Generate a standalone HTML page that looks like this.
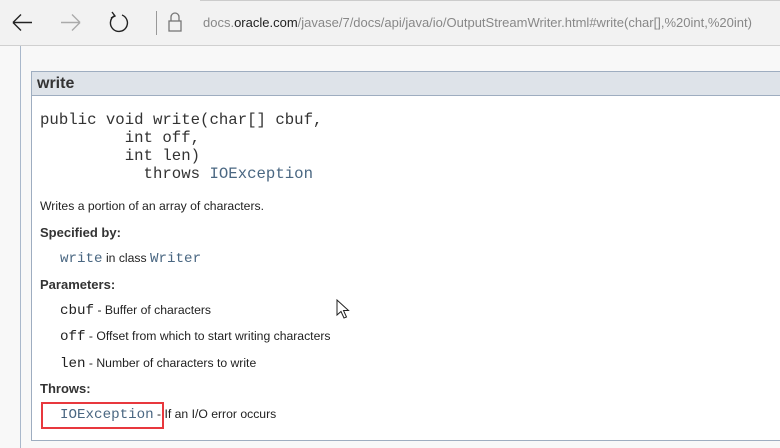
<!DOCTYPE html>
<html><head><style>
body{margin:0;width:780px;height:448px;overflow:hidden;background:#f8f8f8;font-family:"Liberation Sans",Arial,sans-serif;position:relative}
.a{position:absolute;white-space:pre}
.m{font-family:"Liberation Mono","Courier New",monospace}
.lk{color:#4a6782}
.b{font-weight:bold;font-size:13px;color:#333}
.t{font-size:12.2px;color:#222}
.s{font-size:14.2px}
</style></head><body>
<div class="a" style="left:0;top:0;width:780px;height:45px;background:#f2f2f2;border-bottom:1px solid #d0d0d0"></div>
<div class="a" style="left:200px;top:0;width:580px;height:1px;background:#ccc"></div>
<svg class="a" style="left:0;top:0" width="200" height="45">
<path d="M13 22.5H32M13 22.5L21 14.5M13 22.5L21 30.5" stroke="#222" stroke-width="1.4" fill="none"/>
<path d="M61 22.5H80M80 22.5L72 14.5M80 22.5L72 30.5" stroke="#aaa" stroke-width="1.4" fill="none"/>
<path d="M114 16A8.5 8.5 0 1 0 122 15" stroke="#222" stroke-width="1.4" fill="none"/>
<path d="M112 12L115 16L111 18" stroke="#222" stroke-width="1.4" fill="none"/>
<line x1="156.5" y1="11" x2="156.5" y2="35" stroke="#999"/>
<rect x="169" y="21" width="12" height="10" stroke="#777" stroke-width="1.3" fill="none"/>
<path d="M171 21V17A4 4 0 0 1 179 17V21" stroke="#777" stroke-width="1.3" fill="none"/>
</svg>
<div class="a" style="left:203px;top:15px;font-size:13px;color:#888;font-family:'Liberation Sans',sans-serif">docs.<span style="color:#222">oracle.com</span>/javase/7/docs/api/java/io/OutputStreamWriter.html#write(char[],%20int,%20int)</div>
<div class="a" style="left:20px;top:46px;width:1px;height:402px;background:#a9b8cb"></div>
<div class="a" style="left:31px;top:71px;width:760px;height:368px;border:1px solid #9eadc0;background:#fff"></div>
<div class="a" style="left:32px;top:72px;width:760px;height:23px;background:#dee3e9;border-bottom:1px solid #9eadc0"></div>
<div class="a" style="left:37px;top:75px;font-size:16px;font-weight:bold;color:#333">write</div>
<div class="a m" style="left:40px;top:111px;font-size:15.7px;line-height:18px;color:#333">public void write(char[] cbuf,
         int off,
         int len)
           throws <span class="lk">IOException</span></div>
<div class="a t" style="left:40px;top:199px">Writes a portion of an array of characters.</div>
<div class="a b" style="left:40px;top:225px">Specified by:</div>
<div class="a t" style="left:60px;top:251px"><span class="m lk s">write</span> in class <span class="m lk s">Writer</span></div>
<div class="a b" style="left:40px;top:277px">Parameters:</div>
<div class="a t" style="left:60px;top:303px"><span class="m s">cbuf</span> - Buffer of characters</div>
<div class="a t" style="left:60px;top:329px"><span class="m s">off</span> - Offset from which to start writing characters</div>
<div class="a t" style="left:60px;top:356px"><span class="m s">len</span> - Number of characters to write</div>
<div class="a b" style="left:40px;top:381px">Throws:</div>
<div class="a t" style="left:60px;top:407px"><span class="m lk s">IOException</span> - If an I/O error occurs</div>
<div class="a" style="left:41px;top:402px;width:119px;height:23px;border:2px solid #e8383d"></div>
<svg class="a" style="left:336px;top:299px" width="14" height="22"><path d="M1 1V16L5 12.5L8 19L10.5 18L7.5 11.5H12.5Z" fill="#fff" stroke="#222" stroke-width="1"/></svg>
</body></html>
